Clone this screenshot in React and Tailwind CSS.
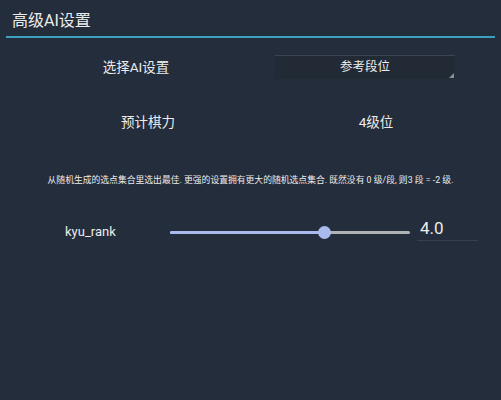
import React from "react";

const font = { fontFamily: "Roboto, 'Noto Sans CJK SC', sans-serif" };

export default function App() {
  const value = 4.0;
  const pct = 64.5;
  return (
    <div className="w-[501px] h-[400px] bg-[#242d3b] text-[#ececec] overflow-hidden" style={font}>
      {/* header */}
      <div className="h-[36px] flex items-center pl-[12px] pt-[6px] text-[16px]">高级AI设置</div>
      <div className="mx-[6px] h-[2px] bg-[#3b9fbd]" />

      {/* row 1 */}
      <div className="h-[58px] flex items-center">
        <div className="w-[272px] text-center text-[13.5px]">选择AI设置</div>
        <div className="relative ml-[3px] w-[180px] h-[24px] bg-[#222a36] border-t border-[#3b4452] flex items-center justify-center text-[12.5px]">
          参考段位
          <div className="absolute right-[1px] bottom-[1px] w-0 h-0 border-l-[5px] border-l-transparent border-b-[5px] border-b-[#8a919a]" />
        </div>
      </div>

      {/* row 2 */}
      <div className="h-[52px] flex items-center text-[13.5px]">
        <div className="w-[296px] text-center">预计棋力</div>
        <div className="w-[160px] text-center">4级位</div>
      </div>

      {/* description */}
      <div className="h-[66px] flex items-center justify-center text-[8.8px] whitespace-nowrap">
        从随机生成的选点集合里选出最佳. 更强的设置拥有更大的随机选点集合. 既然没有 0 级/段, 则3 段 = -2 级.
      </div>

      {/* slider row */}
      <div className="h-[36px] flex items-center">
        <div className="w-[170px] pl-[65px] text-[13px]">kyu_rank</div>
        <div className="relative w-[240px] h-[3px] bg-[#b0b1b3] rounded-full">
          <div className="h-full bg-[#a8baee] rounded-full" style={{ width: `${pct}%` }} />
          <div
            className="absolute top-1/2 w-[13px] h-[13px] -mt-[6.5px] -ml-[6.5px] rounded-full bg-[#a8baee]"
            style={{ left: `${pct}%` }}
          />
        </div>
        <div className="ml-[7px] w-[61px] border-b border-[#36404e] pl-[3px] text-[17px] leading-[20px] pb-[2px] -mt-[6px]">
          {value.toFixed(1)}
        </div>
      </div>
    </div>
  );
}
